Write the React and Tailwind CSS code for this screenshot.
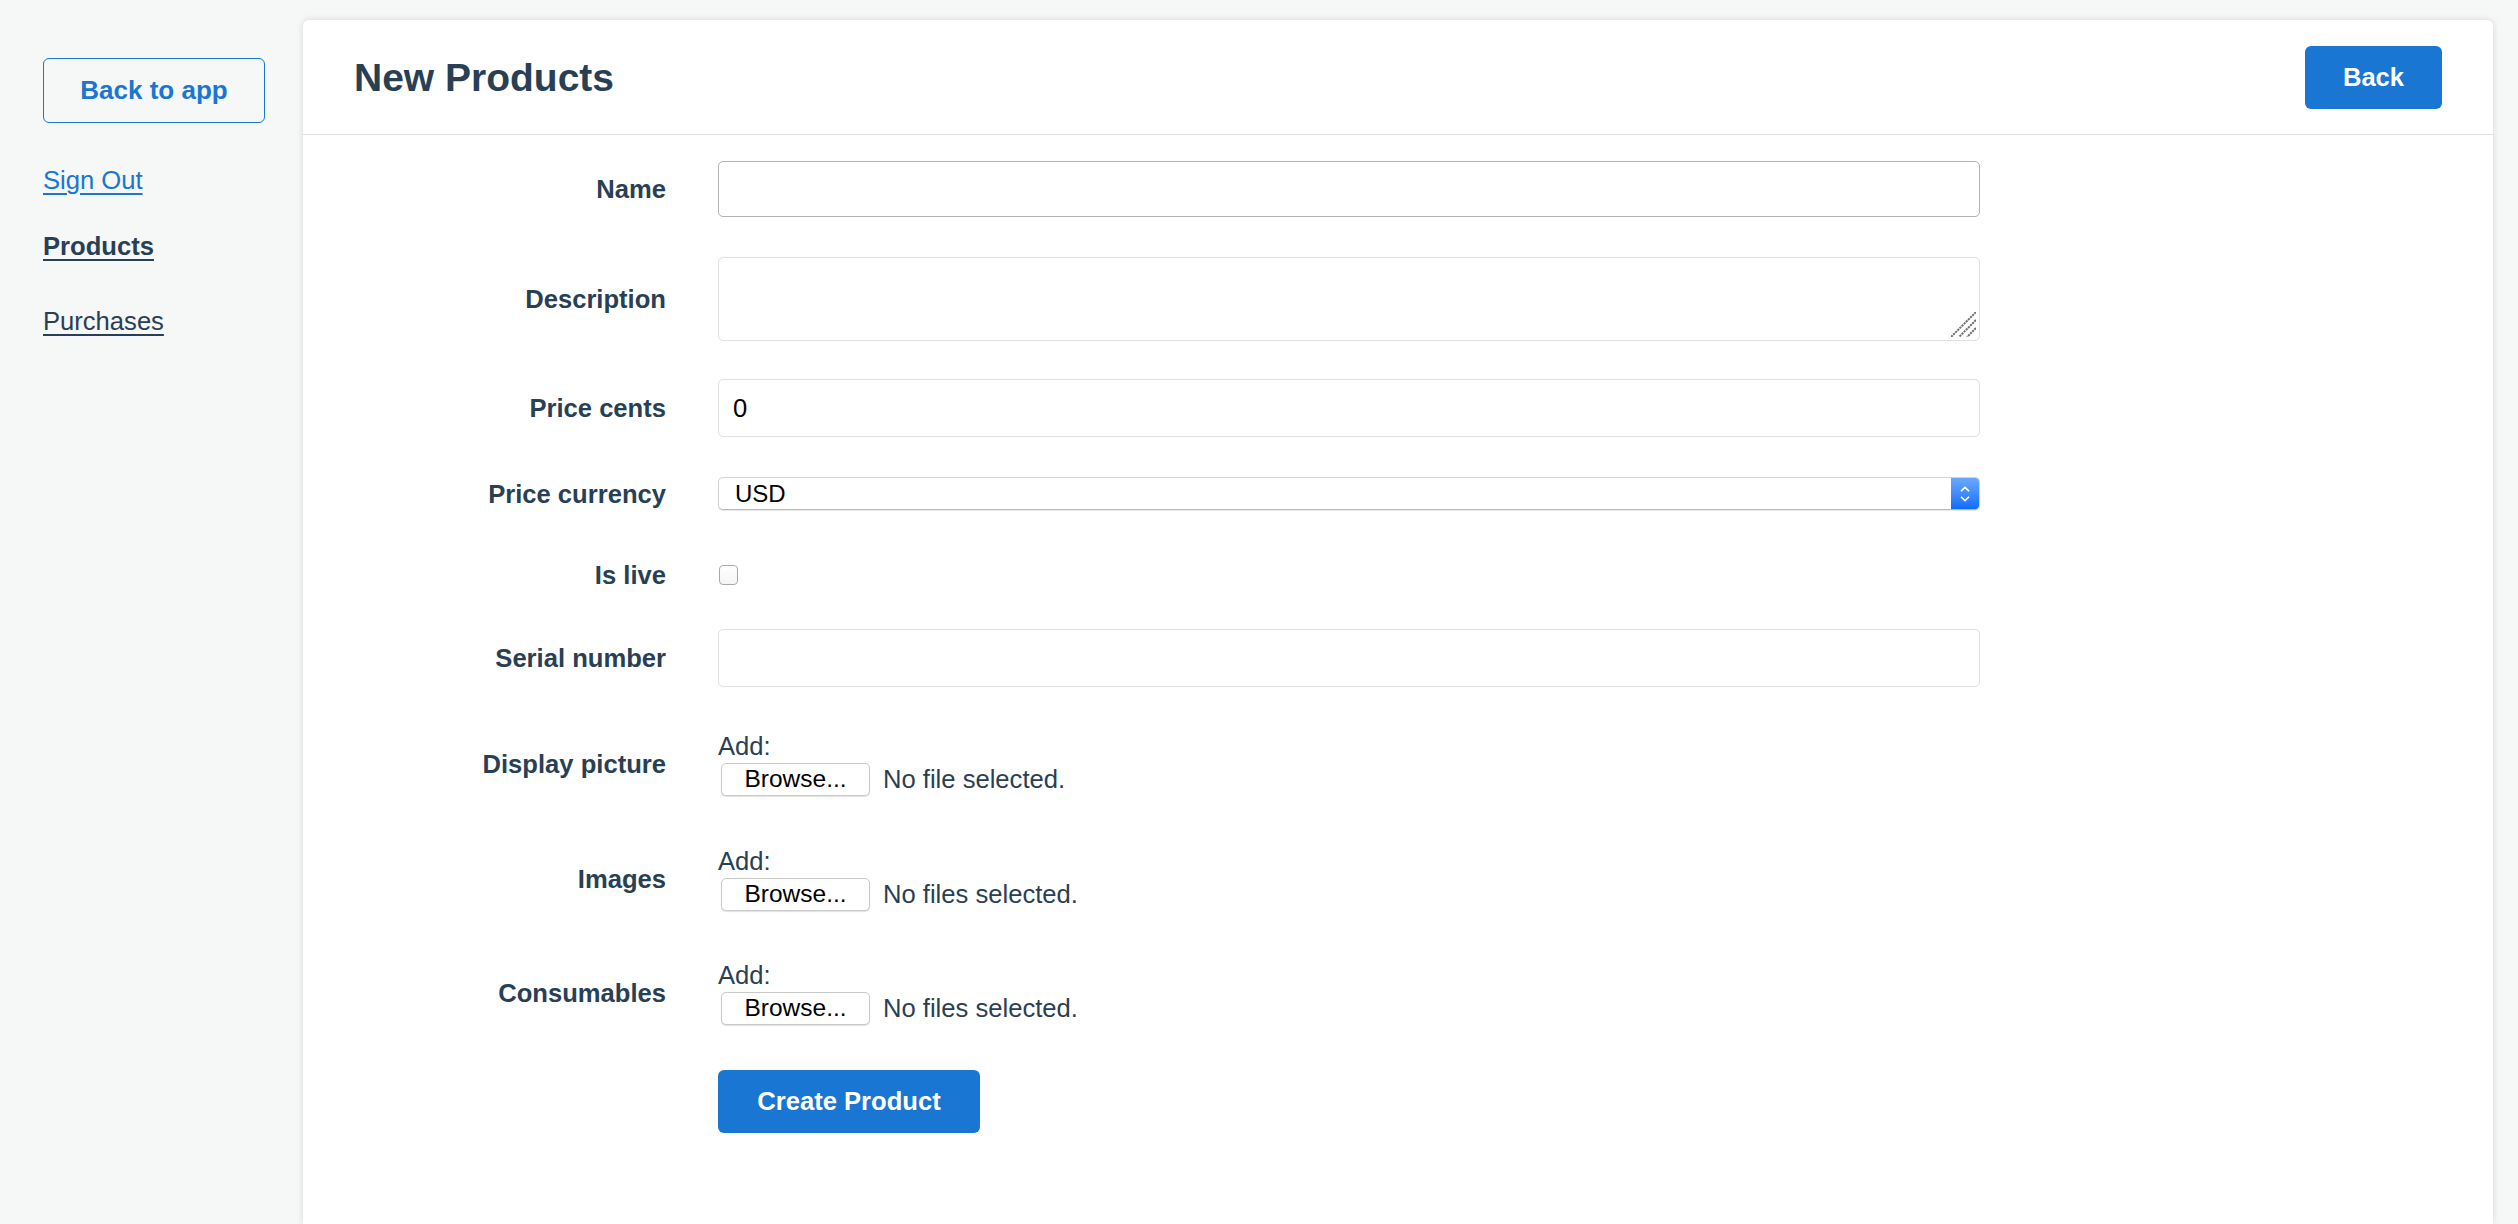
import { ChevronUp, ChevronDown } from 'lucide-react';

const fileFields = [
  { label: 'Display picture', empty: 'No file selected.', mt: 'mt-[44px]' },
  { label: 'Images', empty: 'No files selected.', mt: 'mt-[50px]' },
  { label: 'Consumables', empty: 'No files selected.', mt: 'mt-[49px]' },
];

const Label = ({ children }) => (
  <div className="w-[363px] shrink-0 text-right font-bold text-[25.6px] leading-[30px] text-[#293f54]">
    {children}
  </div>
);

const Row = ({ label, className = '', children }) => (
  <div className={`flex items-center ${className}`}>
    <Label>{label}</Label>
    <div className="ml-[52px] w-[1262px]">{children}</div>
  </div>
);

const TextInput = ({ value = '', height = 'h-[58px]', dark = false }) => (
  <div
    className={`${height} w-full rounded-[5px] border bg-white pl-[14px] flex items-center text-[25.6px] text-black ${
      dark ? 'border-[#b4b4b4]' : 'border-[#e0e1e2]'
    }`}
  >
    {value}
  </div>
);

const FileField = ({ empty }) => (
  <div>
    <div className="h-[30px] leading-[30px] text-[25.6px] text-[#293f54]">Add:</div>
    <div className="mt-[2px] h-[33px] flex items-center">
      <div className="ml-[3px] h-[33px] w-[149px] rounded-[5px] border border-[#c9c9c9] bg-white shadow-[0_1px_1px_rgba(0,0,0,0.12)] flex items-center justify-center text-[24.5px] leading-none text-black">
        Browse...
      </div>
      <span className="ml-[13px] text-[25.6px] leading-none text-[#293f54]">{empty}</span>
    </div>
  </div>
);

export default function App() {
  return (
    <div className="min-h-screen h-screen flex bg-[#f6f7f7] text-[#293f54] font-['Liberation_Sans',Arial,sans-serif] overflow-hidden">
      <aside className="w-[303px] shrink-0 pl-[43px] pt-[58px]">
        <a className="flex items-center justify-center w-[222px] h-[65px] rounded-[6px] border border-[#1976d2] text-[#1976d2] font-bold text-[26px]">
          Back to app
        </a>
        <a className="block mt-[42px] w-fit h-[30px] leading-[30px] text-[25.6px] text-[#1976d2] underline underline-offset-[4px] decoration-[1.5px]">
          Sign Out
        </a>
        <a className="block mt-[36px] w-fit h-[30px] leading-[30px] text-[25.6px] font-bold underline underline-offset-[4px] decoration-[1.5px]">
          Products
        </a>
        <a className="block mt-[45px] w-fit h-[30px] leading-[30px] text-[25.6px] underline underline-offset-[4px] decoration-[1.5px]">
          Purchases
        </a>
      </aside>

      <main className="flex-1 mr-[25px] mt-[20px] bg-white rounded-t-[6px] shadow-[0_0_6px_rgba(0,0,0,0.14)]">
        <header className="h-[115px] px-[51px] flex items-center justify-between border-b border-[#dfe0e1]">
          <h1 className="text-[39px] font-bold leading-none text-[#293f54]">New Products</h1>
          <button className="w-[137px] h-[63px] rounded-[6px] bg-[#1976d2] text-white font-bold text-[25.6px]">
            Back
          </button>
        </header>

        <form className="pt-[26px]">
          <Row label="Name">
            <TextInput height="h-[56px]" dark />
          </Row>

          <Row label="Description" className="mt-[40px]">
            <div className="relative h-[84px] w-full rounded-[5px] border border-[#e0e1e2] bg-white">
              <svg className="absolute right-[3px] bottom-[3px]" width="25" height="25" viewBox="0 0 25 25">
                <g stroke="#6f6f6f" strokeWidth="2" strokeDasharray="2.2 0.8">
                  <line x1="25" y1="0" x2="0" y2="25" />
                  <line x1="25" y1="8" x2="8" y2="25" />
                  <line x1="25" y1="16" x2="16" y2="25" />
                </g>
              </svg>
            </div>
          </Row>

          <Row label="Price cents" className="mt-[38px]">
            <TextInput value="0" />
          </Row>

          <Row label="Price currency" className="mt-[40px]">
            <div className="h-[33px] w-[1262px] flex rounded-[5px] border border-[#d2d2d2] border-b-[#b9b9b9] bg-white shadow-[0_1px_1px_rgba(0,0,0,0.1)] overflow-hidden">
              <div className="flex-1 pl-[16px] flex items-center text-[24px] text-black">USD</div>
              <div className="w-[28px] bg-gradient-to-b from-[#6aa8fb] to-[#0b6bff] flex flex-col items-center justify-center text-white">
                <ChevronUp size={14} strokeWidth={3} className="-mb-[2px]" />
                <ChevronDown size={14} strokeWidth={3} className="-mt-[2px]" />
              </div>
            </div>
          </Row>

          <Row label="Is live" className="mt-[46px] h-[38px]">
            <div className="ml-[1px] w-[19px] h-[20px] rounded-[4px] border border-[#a9a9a9] bg-gradient-to-b from-white to-[#f4f4f4]" />
          </Row>

          <Row label="Serial number" className="mt-[35px]">
            <TextInput />
          </Row>

          {fileFields.map((f, i) => (
            <Row key={i} label={f.label} className={f.mt}>
              <FileField empty={f.empty} />
            </Row>
          ))}

          <div className="mt-[45px] pl-[415px]">
            <button
              type="button"
              className="w-[262px] h-[63px] rounded-[6px] bg-[#1976d2] text-white font-bold text-[25.6px]"
            >
              Create Product
            </button>
          </div>
        </form>
      </main>
    </div>
  );
}
